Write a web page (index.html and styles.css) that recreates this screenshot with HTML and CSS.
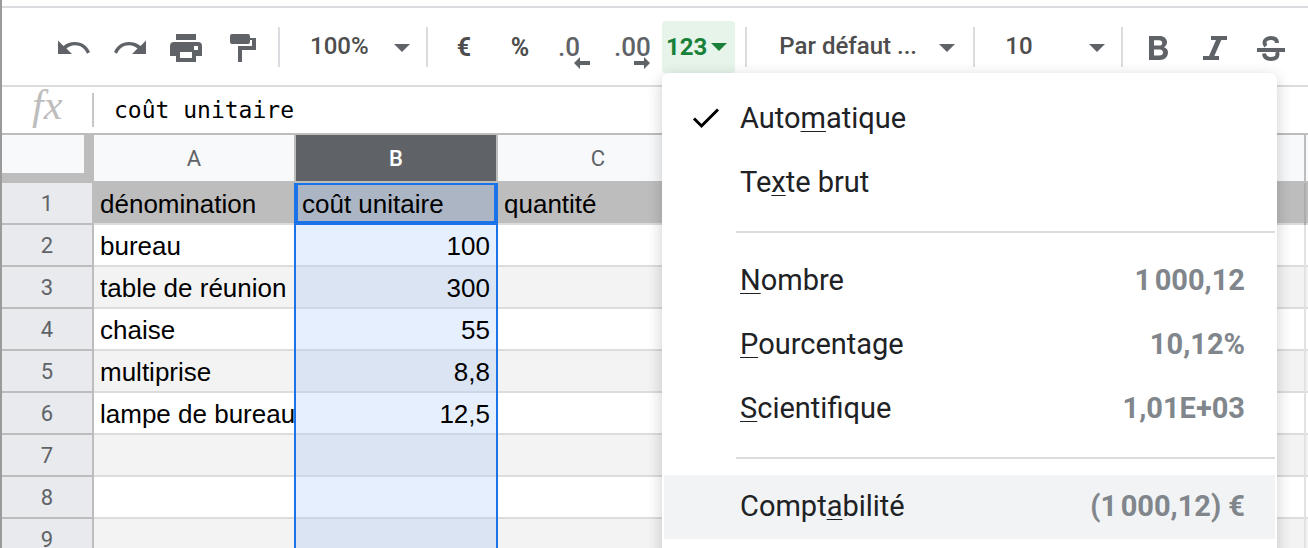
FILE: index.html
```html
<!DOCTYPE html>
<html lang="fr">
<head>
<meta charset="utf-8">
<title>Tableur</title>
<link rel="stylesheet" href="styles.css">
</head>
<body>
<div class="app">
  <div class="toolbar" role="toolbar" aria-label="Mise en forme">
    <div class="history">
      <button type="button" aria-label="Annuler"><svg class="icon" viewBox="0 1 36 36"><path d="M2 12.500V26H16L10.500 20.500C12.500 18.600 15.500 17.200 19 17.200C24.500 17.200 29 20.500 31 25.800L34 24C31.500 18 26 13.900 19 13.900C14.500 13.900 10.500 15.400 7.500 18Z"/></svg></button>
      <button type="button" aria-label="Rétablir"><svg class="icon" viewBox="0 1 36 36"><path d="M34 12.500V26H20L25.500 20.500C23.500 18.600 20.500 17.200 17 17.200C11.500 17.200 7 20.500 5 25.800L2 24C4.500 18 10 13.900 17 13.900C21.500 13.900 25.500 15.400 28.500 18Z"/></svg></button>
      <button type="button" aria-label="Imprimer"><svg class="icon" viewBox="0 1 36 36"><path fill-rule="evenodd" d="M8 6H28V12H8ZM6 14H30Q34 14 34 18V28H28V34H8V28H2V18Q2 14 6 14ZM26 18V22H30V18ZM12 24V30H24V24Z"/></svg></button>
      <button type="button" aria-label="Copier la mise en forme"><svg class="icon" viewBox="0 1 36 36"><path d="M8 6H24Q26 6 26 8V10H32V22H18V34H14V18H28V12H26V14Q26 16 24 16H8Q6 16 6 14V8Q6 6 8 6Z"/></svg></button>
    </div>
    <span class="divider"></span>
    <div class="picker">
      <select aria-label="Zoom"><option>100%</option></select>
      <svg class="caret" viewBox="0 0 16 8"><path d="M0 0H16L8 8Z"/></svg>
    </div>
    <span class="divider"></span>
    <div class="formats">
      <button type="button" class="tool symbol">€</button>
      <button type="button" class="tool symbol">%</button>
      <button type="button" class="tool decimal" aria-label="Réduire le nombre de décimales">.0<svg class="shift" viewBox="0 0 16 12"><path d="M0 6L6 0V4H16V8H6V12Z"/></svg></button>
      <button type="button" class="tool decimal more" aria-label="Augmenter le nombre de décimales">.00<svg class="shift" viewBox="0 0 16 12"><path d="M16 6L10 0V4H0V8H10V12Z"/></svg></button>
    </div>
    <div class="number-format">
      <button type="button" class="number-button" aria-expanded="true">123<svg class="arrow" viewBox="0 0 16 8"><path d="M0 0H16L8 8Z"/></svg></button>
      <div class="menu" role="menu">
        <button type="button" class="item" role="menuitem"><svg class="check" viewBox="0 0 28 22"><path d="M2 11.500L9.500 19L26 2.500"/></svg><span>Auto<u>m</u>atique</span></button>
        <button type="button" class="item" role="menuitem"><span>Te<u>x</u>te brut</span></button>
        <hr>
        <button type="button" class="item" role="menuitem"><span><u>N</u>ombre</span><span class="sample">1&#8239;000,12</span></button>
        <button type="button" class="item" role="menuitem"><span><u>P</u>ourcentage</span><span class="sample">10,12%</span></button>
        <button type="button" class="item" role="menuitem"><span><u>S</u>cientifique</span><span class="sample">1,01E+03</span></button>
        <hr>
        <button type="button" class="item active" role="menuitem"><span>Compt<u>a</u>bilité</span><span class="sample">(1&#8239;000,12) €</span></button>
        <div class="menu-end"></div>
      </div>
    </div>
    <span class="divider"></span>
    <div class="picker family">
      <select aria-label="Police"><option>Par défaut ...</option></select>
      <svg class="caret" viewBox="0 0 16 8"><path d="M0 0H16L8 8Z"/></svg>
    </div>
    <span class="divider"></span>
    <div class="picker">
      <select aria-label="Taille de police"><option>10</option></select>
      <svg class="caret" viewBox="0 0 16 8"><path d="M0 0H16L8 8Z"/></svg>
    </div>
    <span class="divider"></span>
    <div class="styles">
      <button type="button" class="tool" aria-label="Gras"><svg class="icon" viewBox="0 0 36 36"><path fill-rule="evenodd" d="M8 7H18.500C23 7 26 9.500 26 13.300C26 15.600 24.800 17.300 23 18.200C25.600 19.100 27 20.900 27 23.500C27 27.500 23.800 31 19 31H8ZM13 11.200V16.600H18C20 16.600 21.200 15.600 21.200 13.900C21.200 12.200 20 11.200 18 11.200ZM13 20.600V26.600H18.500C20.700 26.600 22 25.400 22 23.600C22 21.800 20.700 20.600 18.500 20.600Z"/></svg></button>
      <button type="button" class="tool" aria-label="Italique"><svg class="icon" viewBox="0 0 36 36"><path d="M14 7H30V11H24.300L17.300 27H22V31H6V27H12L19 11H14Z"/></svg></button>
      <button type="button" class="tool" aria-label="Barré"><svg class="icon" viewBox="0 0 36 36"><path d="M4 19H32V23H4Z"/><path class="stroke" d="M24 14C24 10.800 21.700 9 18 9C14.200 9 11.500 10.800 11.500 13.700C11.500 15 12 16 13 17"/><path class="stroke" d="M11 24.500C11.300 28 14 30 18 30C22 30 24.500 28.300 24.500 25.300C24.500 24.300 24.300 23.500 23.800 22.800"/></svg></button>
    </div>
  </div>

  <div class="formula">
    <span class="fx">fx</span>
    <input class="formula-input" aria-label="Barre de formule" value="coût unitaire">
  </div>

  <table class="sheet">
    <colgroup><col class="num-col"><col class="col"><col class="col"><col class="col"><col class="col"><col class="col"><col class="col"><col class="col"></colgroup>
    <thead>
      <tr><th class="corner"></th><th>A</th><th class="selected">B</th><th>C</th><th></th><th></th><th></th><th></th></tr>
    </thead>
    <tbody>
      <tr class="title"><th>1</th><td>dénomination</td><td class="current">coût unitaire</td><td>quantité</td><td></td><td></td><td></td><td></td></tr>
      <tr><th>2</th><td>bureau</td><td>100</td><td></td><td></td><td></td><td></td><td></td></tr>
      <tr><th>3</th><td>table de réunion</td><td>300</td><td></td><td></td><td></td><td></td><td></td></tr>
      <tr><th>4</th><td>chaise</td><td>55</td><td></td><td></td><td></td><td></td><td></td></tr>
      <tr><th>5</th><td>multiprise</td><td>8,8</td><td></td><td></td><td></td><td></td><td></td></tr>
      <tr><th>6</th><td>lampe de bureau</td><td>12,5</td><td></td><td></td><td></td><td></td><td></td></tr>
      <tr><th>7</th><td></td><td></td><td></td><td></td><td></td><td></td><td></td></tr>
      <tr><th>8</th><td></td><td></td><td></td><td></td><td></td><td></td><td></td></tr>
      <tr><th>9</th><td></td><td></td><td></td><td></td><td></td><td></td><td></td></tr>
    </tbody>
  </table>
</div>
</body>
</html>
```
FILE: styles.css
```css
* { box-sizing: border-box; }

body {
  margin: 0;
  height: 100vh;
  overflow: hidden;
  background: #fff;
  font-family: Roboto, "Liberation Sans", sans-serif;
}

button, select, input {
  margin: 0;
  padding: 0;
  border: 0;
  background: none;
  color: inherit;
  font: inherit;
}

svg { display: block; fill: currentColor; }

.app {
  height: 100%;
  padding-top: 6px;
  border-left: 2px solid #9a9a9a;
  overflow: hidden;
}

/* Toolbar */
.toolbar {
  display: flex;
  align-items: center;
  padding: 13px 0 12px 54px;
  border-top: 2px solid #dadce0;
  border-bottom: 2px solid #dadce0;
  color: #5f6368;
  font-size: 24px;
  font-weight: 500;
  white-space: nowrap;
}

.toolbar > * { flex: none; }

.history { display: flex; gap: 20px; margin-right: 18px; }
.icon { width: 36px; height: 36px; }
.icon .stroke { fill: none; stroke: currentColor; stroke-width: 4px; }
.divider { width: 2px; height: 40px; background: #dadce0; }

.picker { position: relative; width: 146px; color: #4d4d4d; }
.picker select {
  width: 100%;
  height: 52px;
  padding: 0 40px 2px 30px;
  appearance: none;
}
.picker.family { width: 226px; }
.picker.family select { padding-left: 32px; }
.caret {
  position: absolute;
  top: 23px;
  right: 16px;
  width: 16px;
  height: 8px;
  color: #5f6368;
  pointer-events: none;
}
.family .caret { right: 18px; }

.formats { display: flex; padding: 0 2px 0 8px; color: #4d4d4d; }
.tool {
  display: flex;
  align-items: center;
  justify-content: center;
  width: 56px;
  height: 52px;
}
.symbol { font-size: 25px; font-weight: 700; }
.decimal {
  position: relative;
  justify-content: flex-start;
  padding-left: 10px;
  color: #5f6368;
  font-size: 26px;
}
.shift {
  position: absolute;
  right: 14px;
  bottom: 4px;
  width: 16px;
  height: 12px;
}
.more .shift { right: 10px; }

.number-format { position: relative; margin-right: 10px; }
.number-button {
  display: flex;
  align-items: center;
  gap: 4px;
  height: 52px;
  padding: 0 8px 0 4px;
  border-radius: 4px;
  background: #e6f4ea;
  color: #188038;
  font-weight: 700;
}
.arrow { width: 16px; height: 8px; }

.styles { display: flex; padding-left: 8px; }

/* Number format menu */
.menu {
  position: absolute;
  z-index: 2;
  top: 100%;
  left: 0;
  width: 615px;
  padding: 14px 2px;
  border-radius: 8px;
  background: #fff;
  box-shadow: 0 4px 16px rgba(0, 0, 0, .2);
  color: #202124;
  font-size: 29px;
  font-weight: 400;
}
.item {
  position: relative;
  display: flex;
  align-items: center;
  justify-content: space-between;
  width: 100%;
  height: 64px;
  padding: 0 30px 2px 76px;
}
.item.active { background: #f1f3f4; }
.item u {
  text-decoration-thickness: 1px;
  text-underline-offset: 3px;
  text-decoration-skip-ink: none;
}
.sample { color: #80868b; font-weight: 700; }
.check {
  position: absolute;
  left: 28px;
  width: 28px;
  height: 22px;
  fill: none;
  stroke: #000;
  stroke-width: 3px;
}
.menu hr {
  height: 2px;
  margin: 16px 0 16px 72px;
  border: 0;
  background: #dadce0;
}
.menu-end { height: 64px; }

/* Formula bar */
.formula {
  display: flex;
  align-items: center;
  height: 48px;
  border-bottom: 2px solid #bdbdbd;
}
.fx {
  width: 92px;
  height: 34px;
  padding-left: 30px;
  border-right: 2px solid #c6c6c6;
  color: #bdbdbd;
  font: italic 42px/24px "Liberation Serif", serif;
}
.formula-input {
  flex: 1;
  padding-left: 20px;
  color: #000;
  font: 23px "DejaVu Sans Mono", monospace;
}

/* Grid */
.sheet {
  width: 1506px;
  table-layout: fixed;
  border-collapse: separate;
  border-spacing: 0;
}
.num-col { width: 92px; }
.col { width: 202px; }

.sheet th {
  height: 42px;
  padding: 0;
  border: solid #bdbdbd;
  border-width: 0 2px 2px 0;
  background: #e8eaed;
  color: #5f6368;
  font-size: 22px;
  font-weight: 400;
}
.sheet thead th {
  height: 48px;
  background: #f8f9fa;
}
.sheet thead .corner { border-width: 0 10px 10px 0; }
.sheet thead .selected { background: #5f6368; color: #fff; font-weight: 500; }

/* Row lines are inset shadows, so the column borders run unbroken */
.sheet td {
  height: 42px;
  padding: 0 6px;
  border-right: 2px solid #e2e2e2;
  box-shadow: inset 0 -2px #dcdcdc;
  overflow: hidden;
  color: #000;
  font: 26px/42px "Liberation Sans", Arial, sans-serif;
  white-space: nowrap;
}
.sheet tbody tr:nth-child(odd) td { background: #f3f3f3; }
.sheet tbody tr.title td { background: #bdbdbd; border-right-color: #acacac; }

.sheet tbody tr td:nth-child(2) { padding-right: 0; border-right-color: #1a73e8; }
.sheet tbody tr td:nth-child(3) {
  border-right-color: #1a73e8;
  background: #e6effd;
  box-shadow: inset 0 -2px #ccd6e7;
  text-align: right;
}
.sheet tbody tr:nth-child(odd) td:nth-child(3) { background: #dbe4f3; }
.sheet tbody tr.title td:nth-child(2) { border-right-color: #1a73e8; }
.sheet tbody tr.title td.current {
  border-right-color: #1a73e8;
  background: #abb5c4;
  box-shadow: inset 0 0 0 2px #1a73e8, inset 0 -4px #1a73e8;
  text-align: left;
}
```
